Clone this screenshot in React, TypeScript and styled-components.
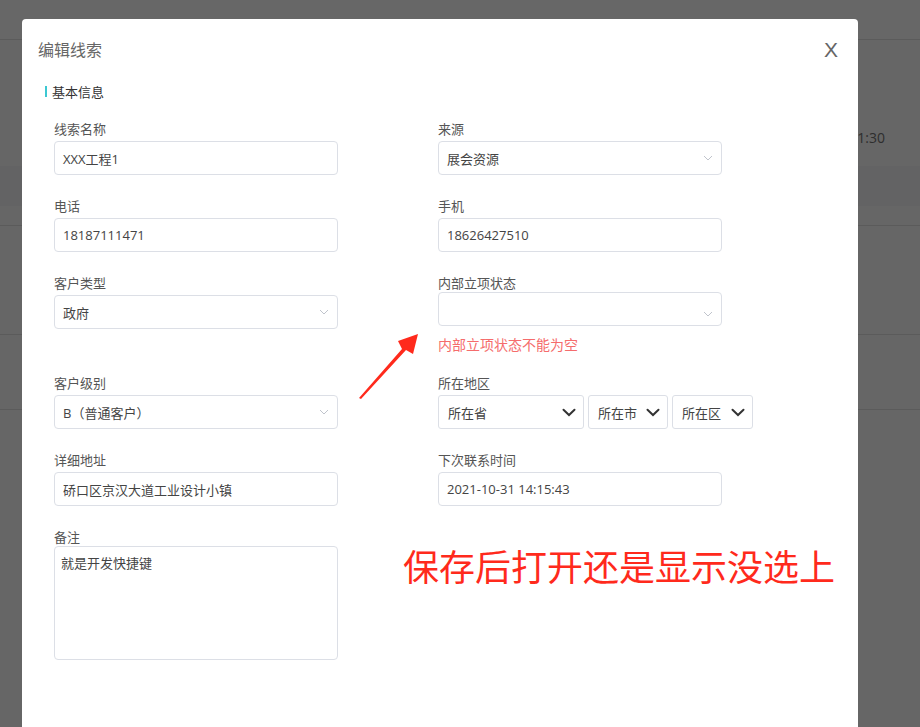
import React from 'react'
import styled, { createGlobalStyle } from 'styled-components'

const GlobalStyle = createGlobalStyle`
    html, body {
        margin: 0;
        padding: 0;
    }
    body {
        font-family: "Open Sans", "Noto Sans CJK SC", sans-serif;
        background: #666;
    }
    * {
        box-sizing: border-box;
    }
`
const Backdrop = styled.div`
    position: relative;
    width: 920px;
    height: 727px;
    overflow: hidden;
    background-color: #666;
    display: flex;
    flex-direction: column;
`
const BgRow = styled.div<{ $h: number; $bg?: string; $line?: boolean }>`
    height: ${p => p.$h}px;
    flex-shrink: 0;
    background-color: ${p => p.$bg || '#666'};
    border-bottom: ${p => (p.$line ? '1px solid #5b5b5b' : 'none')};
    display: flex;
    justify-content: flex-end;
    align-items: flex-end;
    padding-right: 35px;
    padding-bottom: 19px;
    font-size: 14px;
    color: #2e2e2e;
`
const Modal = styled.div`
    position: absolute;
    left: 22px;
    top: 19px;
    width: 836px;
    bottom: -20px;
    background-color: #fff;
    border-radius: 4px;
`
const Header = styled.div`
    display: flex;
    justify-content: space-between;
    align-items: center;
    padding: 20px 20px 0 16px;
    height: 42px;
`
const Title = styled.span`
    font-size: 16px;
    line-height: 22px;
    color: #666;
`
const Close = styled.span`
    font-family: "Liberation Sans", sans-serif;
    font-size: 21px;
    line-height: 22px;
    color: #666;
    cursor: pointer;
`
const Section = styled.div`
    display: flex;
    align-items: center;
    gap: 5px;
    margin: 19px 0 0 23px;
    height: 22px;
    font-size: 13px;
    color: #333;
`
const SectionBar = styled.i`
    display: block;
    width: 2px;
    height: 11px;
    background-color: #3cc8d2;
`
const FormGrid = styled.div`
    display: grid;
    grid-template-columns: 384px 384px;
    row-gap: 22px;
    align-items: start;
    margin-top: 18px;
    padding-left: 32px;
`
const Item = styled.div`
    display: flex;
    flex-direction: column;
`
const Label = styled.label<{ $tight?: boolean }>`
    font-size: 13px;
    line-height: 18px;
    color: #555;
    margin-bottom: ${p => (p.$tight ? '0' : '3px')};
`
const Input = styled.div`
    position: relative;
    width: 284px;
    height: 34px;
    border: 1px solid #dcdfe6;
    border-radius: 4px;
    padding: 0 24px 0 8px;
    display: flex;
    align-items: center;
    font-size: 13px;
    color: #444;
`
const Arrow = styled.svg<{ $bottom?: boolean }>`
    position: absolute;
    right: 8px;
    ${p => (p.$bottom ? 'bottom: 8px;' : 'top: 13px;')}
`
const ErrorText = styled.div`
    margin-top: 12px;
    font-size: 14px;
    line-height: 14px;
    color: #f56c6c;
`
const RegionRow = styled.div`
    display: flex;
    gap: 4px;
`
const RegionSelect = styled.div<{ $w: number }>`
    width: ${p => p.$w}px;
    height: 34px;
    border: 1px solid #dcdfe6;
    border-radius: 3px;
    padding: 0 7px 0 9px;
    display: flex;
    align-items: center;
    justify-content: space-between;
    font-size: 13px;
    color: #444;
`
const TextArea = styled.div`
    width: 284px;
    height: 114px;
    border: 1px solid #dcdfe6;
    border-radius: 4px;
    padding: 7px 6px;
    font-size: 13px;
    line-height: 18px;
    color: #444;
`
const Note = styled.div`
    position: absolute;
    left: 381px;
    top: 524px;
    font-size: 36px;
    line-height: 44px;
    color: #ff2a1c;
    font-family: "Noto Sans CJK SC", sans-serif;
    white-space: nowrap;
`
const Pointer = styled.svg`
    position: absolute;
    left: 333px;
    top: 311px;
`

const Thin = ({ bottom }: { bottom?: boolean }) => (
    <Arrow $bottom={bottom} width="10" height="6" viewBox="0 0 10 6">
        <path d="M1 1 L5 5 L9 1" fill="none" stroke="#c0c4cc" strokeWidth="1" />
    </Arrow>
)

const Chevron = () => (
    <svg width="14" height="9" viewBox="0 0 14 9">
        <path d="M1.5 1.8 L7 7 L12.5 1.8" fill="none" stroke="#333" strokeWidth="2" strokeLinecap="round" />
    </svg>
)

function App() {
    return (
        <>
            <GlobalStyle />
            <Backdrop>
                <BgRow $h={40} $bg="#676767" $line />
                <BgRow $h={126}>2021-10-31 11:30</BgRow>
                <BgRow $h={40} $bg="#636364" />
                <BgRow $h={17} $line />
                <BgRow $h={109} $line />
                <BgRow $h={75} $line />
                <BgRow $h={320} />
                <Modal>
                    <Header>
                        <Title>编辑线索</Title>
                        <Close>X</Close>
                    </Header>
                    <Section>
                        <SectionBar />
                        基本信息
                    </Section>
                    <FormGrid>
                        <Item>
                            <Label>线索名称</Label>
                            <Input>XXX工程1</Input>
                        </Item>
                        <Item>
                            <Label>来源</Label>
                            <Input>展会资源<Thin /></Input>
                        </Item>
                        <Item>
                            <Label>电话</Label>
                            <Input>18187111471</Input>
                        </Item>
                        <Item>
                            <Label>手机</Label>
                            <Input>18626427510</Input>
                        </Item>
                        <Item>
                            <Label>客户类型</Label>
                            <Input>政府<Thin /></Input>
                        </Item>
                        <Item>
                            <Label $tight>内部立项状态</Label>
                            <Input><Thin bottom /></Input>
                            <ErrorText>内部立项状态不能为空</ErrorText>
                        </Item>
                        <Item>
                            <Label>客户级别</Label>
                            <Input>B（普通客户）<Thin /></Input>
                        </Item>
                        <Item>
                            <Label>所在地区</Label>
                            <RegionRow>
                                <RegionSelect $w={146}>所在省<Chevron /></RegionSelect>
                                <RegionSelect $w={80}>所在市<Chevron /></RegionSelect>
                                <RegionSelect $w={81}>所在区<Chevron /></RegionSelect>
                            </RegionRow>
                        </Item>
                        <Item>
                            <Label>详细地址</Label>
                            <Input>硚口区京汉大道工业设计小镇</Input>
                        </Item>
                        <Item>
                            <Label>下次联系时间</Label>
                            <Input>2021-10-31 14:15:43</Input>
                        </Item>
                        <Item>
                            <Label $tight>备注</Label>
                            <TextArea>就是开发快捷键</TextArea>
                        </Item>
                    </FormGrid>
                    <Pointer width="70" height="72" viewBox="0 0 70 72">
                        <polygon points="4,68 47,19 43,11 63,4 58,24 51,20 6,69" fill="#ff2a1c" />
                    </Pointer>
                    <Note>保存后打开还是显示没选上</Note>
                </Modal>
            </Backdrop>
        </>
    )
}

export default App
